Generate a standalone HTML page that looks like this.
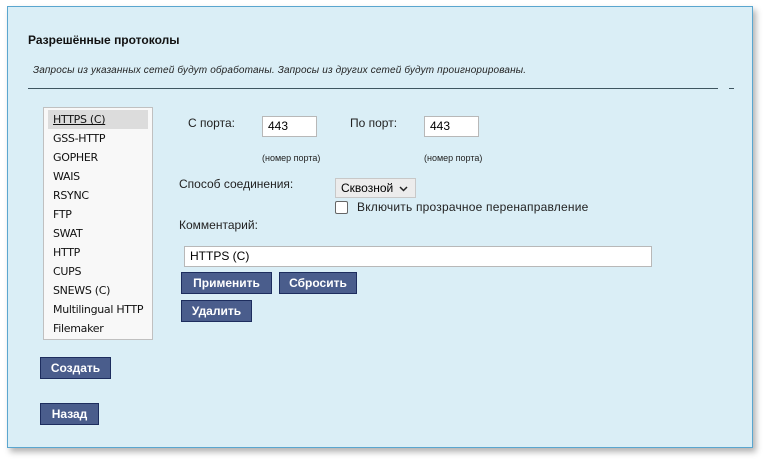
<!DOCTYPE html>
<html><head><meta charset="utf-8"><style>
body{margin:0;width:766px;height:462px;background:#fff;font-family:"Liberation Sans","DejaVu Sans",sans-serif;position:relative;overflow:hidden}
.panel{position:absolute;left:7px;top:6px;width:744px;height:440px;background:#daeef6;border:1px solid #5aa6cf;box-shadow:3px 4px 6px rgba(0,0,0,0.3)}
.a{position:absolute;white-space:nowrap}
.btn{position:absolute;background:#4a5d8c;border:1px solid #1d2d5e;color:#fff;font-weight:bold;font-size:12px;text-align:center;box-sizing:border-box;line-height:20px}
.inp{position:absolute;background:#fff;border:1px solid #b8b8b8;box-sizing:border-box;font-size:12px;padding-left:5px}
.list{position:absolute;left:43px;top:107px;width:110px;height:233px;background:#f8f8f8;border:1px solid #c0c0c0;box-sizing:border-box}
.list div{position:absolute;left:4px;width:100px;height:19px;line-height:19px;white-space:nowrap;padding-left:5px;box-sizing:border-box;color:#111;font-family:"DejaVu Sans",sans-serif;font-size:11px;letter-spacing:-0.3px}
</style></head><body>
<div class="panel"></div>
<div class="a" style="left:28px;top:33px;font-size:12px;font-weight:bold;color:#111">Разрешённые протоколы</div>
<div class="a" style="left:33px;top:65px;font-size:10px;font-style:italic;color:#222;letter-spacing:0.15px">Запросы из указанных сетей будут обработаны. Запросы из других сетей будут проигнорированы.</div>
<div class="a" style="left:28px;top:88px;width:690px;height:1px;background:#3e5560"></div>
<div class="a" style="left:729px;top:88px;width:5px;height:1px;background:#3e5560"></div>
<div class="list">
<div style="top:2px;background:#dcdcdc;text-decoration:underline">HTTPS (C)</div>
<div style="top:21px">GSS-HTTP</div>
<div style="top:40px">GOPHER</div>
<div style="top:59px">WAIS</div>
<div style="top:78px">RSYNC</div>
<div style="top:97px">FTP</div>
<div style="top:116px">SWAT</div>
<div style="top:135px">HTTP</div>
<div style="top:154px">CUPS</div>
<div style="top:173px">SNEWS (C)</div>
<div style="top:192px">Multilingual HTTP</div>
<div style="top:211px">Filemaker</div>
</div>
<div class="a" style="left:188px;top:116px;font-size:12px;color:#222">С порта:</div>
<div class="inp" style="left:262px;top:116px;width:55px;height:21px;line-height:19px">443</div>
<div class="a" style="left:350px;top:116px;font-size:12px;color:#222">По порт:</div>
<div class="inp" style="left:424px;top:116px;width:55px;height:21px;line-height:19px">443</div>
<div class="a" style="left:262px;top:153px;font-size:9px;color:#222">(номер порта)</div>
<div class="a" style="left:424px;top:153px;font-size:9px;color:#222">(номер порта)</div>
<div class="a" style="left:179px;top:177px;font-size:12px;color:#222">Способ соединения:</div>
<div class="a" style="left:335px;top:178px;width:81px;height:20px;background:#ececec;border:1px solid #c8c8c8;box-sizing:border-box;font-size:12px;line-height:18px;padding-left:5px">Сквозной <svg width="9" height="6" viewBox="0 0 9 6" style="margin-left:2px"><path d="M1 1l3.5 3.5L8 1" stroke="#222" stroke-width="1.5" fill="none"/></svg></div>
<div class="a" style="left:335px;top:201px;width:13px;height:13px;background:#fff;border:1px solid #666;border-radius:2px;box-sizing:border-box"></div>
<div class="a" style="left:357px;top:200px;font-size:12px;color:#222;letter-spacing:0.2px">Включить прозрачное перенаправление</div>
<div class="a" style="left:179px;top:218px;font-size:12px;color:#222">Комментарий:</div>
<div class="inp" style="left:184px;top:246px;width:468px;height:21px;line-height:19px">HTTPS (C)</div>
<div class="btn" style="left:181px;top:272px;width:91px;height:22px">Применить</div>
<div class="btn" style="left:279px;top:272px;width:78px;height:22px">Сбросить</div>
<div class="btn" style="left:181px;top:300px;width:71px;height:22px">Удалить</div>
<div class="btn" style="left:40px;top:357px;width:71px;height:22px">Создать</div>
<div class="btn" style="left:40px;top:403px;width:59px;height:22px">Назад</div>
</body></html>
